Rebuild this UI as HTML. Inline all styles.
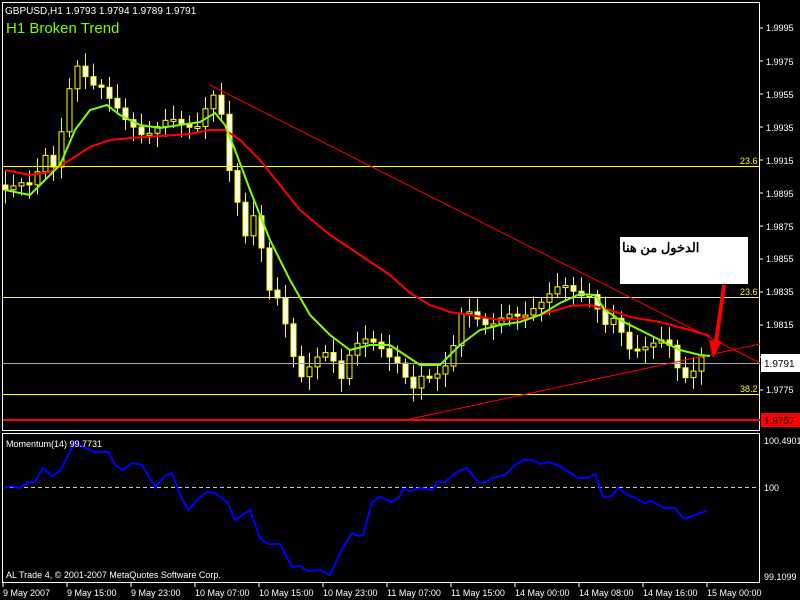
<!DOCTYPE html>
<html><head><meta charset="utf-8">
<style>
html,body{margin:0;padding:0;background:#000;width:800px;height:600px;overflow:hidden}
svg{display:block}
text{font-family:"Liberation Sans","Noto Sans CJK SC",sans-serif}
</style></head><body>
<svg id="s" width="800" height="600" xmlns="http://www.w3.org/2000/svg">
<rect width="800" height="600" fill="#000"/>
<!-- frames -->
<rect x="2.5" y="2.5" width="757" height="428" fill="none" stroke="#fff"/>
<rect x="2.5" y="433.5" width="757" height="149" fill="none" stroke="#fff"/>
<g id="candles"></g>
<!-- horizontal levels -->
<line x1="3" y1="166.5" x2="760" y2="166.5" stroke="#ff0"/>
<line x1="3" y1="297.5" x2="760" y2="297.5" stroke="#e8e8a0"/>
<line x1="3" y1="363.5" x2="760" y2="363.5" stroke="#aaa"/>
<line x1="3" y1="394.5" x2="760" y2="394.5" stroke="#ff0"/>
<line x1="3" y1="420" x2="760" y2="420" stroke="#f00" stroke-width="2"/>
<!-- trend lines -->
<line x1="210" y1="85" x2="760" y2="363" stroke="#f00"/>
<line x1="410" y1="419" x2="760" y2="344" stroke="#f00"/>
<!-- MAs -->
<polyline fill="none" stroke="#f00" stroke-width="2" points="5,170 30,175 50,172 70,160 90,147 110,140 130,138 160,136 190,134 210,130 225,130 240,140 260,160 280,185 300,210 330,235 360,255 390,275 410,293 430,305 450,312 470,315 500,320 530,318 550,312 570,306 590,305 610,310 630,317 660,322 690,330 710,336"/>
<polyline fill="none" stroke="#7fff00" stroke-width="2" points="5,190 30,195 50,175 60,165 75,130 90,110 107,105 120,115 140,125 160,128 180,125 200,122 215,113 225,125 235,150 250,190 270,240 290,280 310,315 330,335 350,350 370,345 390,345 405,355 420,365 440,365 460,345 480,330 500,325 520,322 540,315 560,303 580,294 595,295 605,310 620,320 640,330 660,340 680,350 700,355 710,356"/>
<!-- title -->
<text x="5" y="14" fill="#fff" font-size="10">GBPUSD,H1  1.9793 1.9794 1.9789 1.9791</text>
<text x="6" y="33" fill="#7cfc00" font-size="15">H1 Broken Trend</text>
<!-- fib labels -->
<text x="740" y="164" fill="#ff0" font-size="9">23.6</text>
<text x="740" y="295" fill="#ff0" font-size="9">23.6</text>
<text x="740" y="392" fill="#ff0" font-size="9">38.2</text>
<!-- price axis -->
<g fill="#fff" font-size="9">
<text x="766" y="31">1.9995</text><text x="766" y="65">1.9975</text><text x="766" y="98">1.9955</text>
<text x="766" y="131">1.9935</text><text x="766" y="164">1.9915</text><text x="766" y="197">1.9895</text>
<text x="766" y="230">1.9875</text><text x="766" y="262">1.9855</text><text x="766" y="295">1.9835</text>
<text x="766" y="328">1.9815</text><text x="766" y="361">1.9795</text><text x="766" y="393">1.9775</text>
</g>
<g stroke="#fff"><line x1="760" y1="28" x2="763" y2="28"/><line x1="760" y1="61" x2="763" y2="61"/><line x1="760" y1="94" x2="763" y2="94"/><line x1="760" y1="127" x2="763" y2="127"/><line x1="760" y1="160" x2="763" y2="160"/><line x1="760" y1="193" x2="763" y2="193"/><line x1="760" y1="226" x2="763" y2="226"/><line x1="760" y1="259" x2="763" y2="259"/><line x1="760" y1="292" x2="763" y2="292"/><line x1="760" y1="325" x2="763" y2="325"/><line x1="760" y1="357" x2="763" y2="357"/><line x1="760" y1="390" x2="763" y2="390"/></g>
<rect x="761" y="354" width="39" height="18" fill="#fff"/>
<text x="764" y="367" fill="#000" font-size="10">1.9791</text>
<rect x="761" y="413" width="39" height="14" fill="#f00"/>
<text x="764" y="424" fill="#000" font-size="10">1.9757</text>
<!-- annotation -->
<rect x="620" y="237" width="128" height="47" fill="#fff"/>
<text x="622" y="252" fill="#000" font-size="13" font-weight="bold">الدخول من هنا</text>
<path d="M724,285 L722,300 L716,342" stroke="#f00" stroke-width="4" fill="none"/>
<polygon points="709,340 722,341 713,358" fill="#f00"/>
<!-- momentum -->
<line x1="3" y1="487.5" x2="760" y2="487.5" stroke="#ccc" stroke-dasharray="4,3"/>
<polyline fill="none" stroke="#00f" stroke-width="2" points="3,488 10,486 20,488 27,482 35,482 43,468 52,476 60,471 75,442 85,448 95,452 108,452 115,465 123,470 132,463 142,465 155,487 165,476 172,473 180,495 188,510 200,497 207,492 215,493 228,503 235,520 250,510 260,538 268,544 280,544 292,567 300,566 308,571 320,570 330,575 342,549 352,533 358,536 363,535 372,502 380,497 392,502 400,496 403,489 410,491 420,488 433,490 437,482 445,482 458,471 467,468 478,482 485,483 492,478 505,475 515,465 523,460 532,460 540,464 548,462 560,466 578,478 587,478 595,474 603,497 612,496 618,488 628,495 635,498 645,503 650,501 665,508 675,508 683,518 690,517 700,513 707,511"/>
<text x="6" y="447" fill="#fff" font-size="9">Momentum(14) 99.7731</text>
<text x="6" y="578" fill="#fff" font-size="9">AL Trade 4, © 2001-2007 MetaQuotes Software Corp.</text>
<g fill="#fff" font-size="9"><text x="764" y="444">100.4901</text><text x="764" y="491">100</text><text x="764" y="580">99.1099</text></g>
<!-- time axis -->
<g fill="#fff" font-size="9">
<text x="3" y="596">9 May 2007</text><text x="67" y="596">9 May 15:00</text><text x="131" y="596">9 May 23:00</text>
<text x="195" y="596">10 May 07:00</text><text x="259" y="596">10 May 15:00</text><text x="323" y="596">10 May 23:00</text>
<text x="387" y="596">11 May 07:00</text><text x="451" y="596">11 May 15:00</text><text x="515" y="596">14 May 00:00</text>
<text x="579" y="596">14 May 08:00</text><text x="643" y="596">14 May 16:00</text><text x="707" y="596">15 May 00:00</text>
</g>
<g stroke="#fff"><line x1="3" y1="583" x2="3" y2="587"/><line x1="67" y1="583" x2="67" y2="587"/><line x1="131" y1="583" x2="131" y2="587"/><line x1="195" y1="583" x2="195" y2="587"/><line x1="259" y1="583" x2="259" y2="587"/><line x1="323" y1="583" x2="323" y2="587"/><line x1="387" y1="583" x2="387" y2="587"/><line x1="451" y1="583" x2="451" y2="587"/><line x1="515" y1="583" x2="515" y2="587"/><line x1="579" y1="583" x2="579" y2="587"/><line x1="643" y1="583" x2="643" y2="587"/><line x1="707" y1="583" x2="707" y2="587"/></g>
</svg>
<script>
var P=[[5,185],[30,190],[45,150],[55,165],[65,110],[75,70],[90,80],[100,80],[115,110],[125,125],[140,130],[160,125],[180,125],[200,120],[210,95],[220,110],[225,160],[235,190],[245,230],[255,210],[265,280],[270,300],[280,300],[290,340],[300,375],[310,370],[320,360],[330,350],[340,375],[350,350],[360,345],[380,345],[395,355],[405,380],[410,400],[420,380],[430,375],[440,365],[450,360],[460,320],[470,315],[490,320],[510,320],[520,320],[535,300],[550,295],[565,290],[580,290],[595,290],[600,340],[610,320],[620,330],[630,345],[640,345],[650,350],[660,345],[670,345],[680,370],[690,375],[700,362],[708,362]];
function f(x){for(var i=1;i<P.length;i++){if(x<=P[i][0]){var a=P[i-1],b=P[i];return a[1]+(b[1]-a[1])*(x-a[0])/(b[0]-a[0]);}}return P[P.length-1][1];}
var g=document.getElementById('candles'),h='',prev=f(5);
for(var x=5;x<=708;x+=8){var c=f(x)+Math.sin(x*1.7)*6;var o=prev;var t=Math.min(o,c),b=Math.max(o,c);if(b-t<2)b=t+2;
var hi=t-4-Math.abs(Math.sin(x*0.9))*10,lo=b+4+Math.abs(Math.cos(x*1.3))*10;
h+='<line x1="'+(x+0.5)+'" y1="'+hi+'" x2="'+(x+0.5)+'" y2="'+lo+'" stroke="#ff0"/>';
h+='<rect x="'+(x-2)+'" y="'+t+'" width="5" height="'+(b-t)+'" fill="'+(c>o?'#fff':'#000')+'" stroke="#ff0"/>';prev=c;}
g.innerHTML=h;
</script>
</body></html>
